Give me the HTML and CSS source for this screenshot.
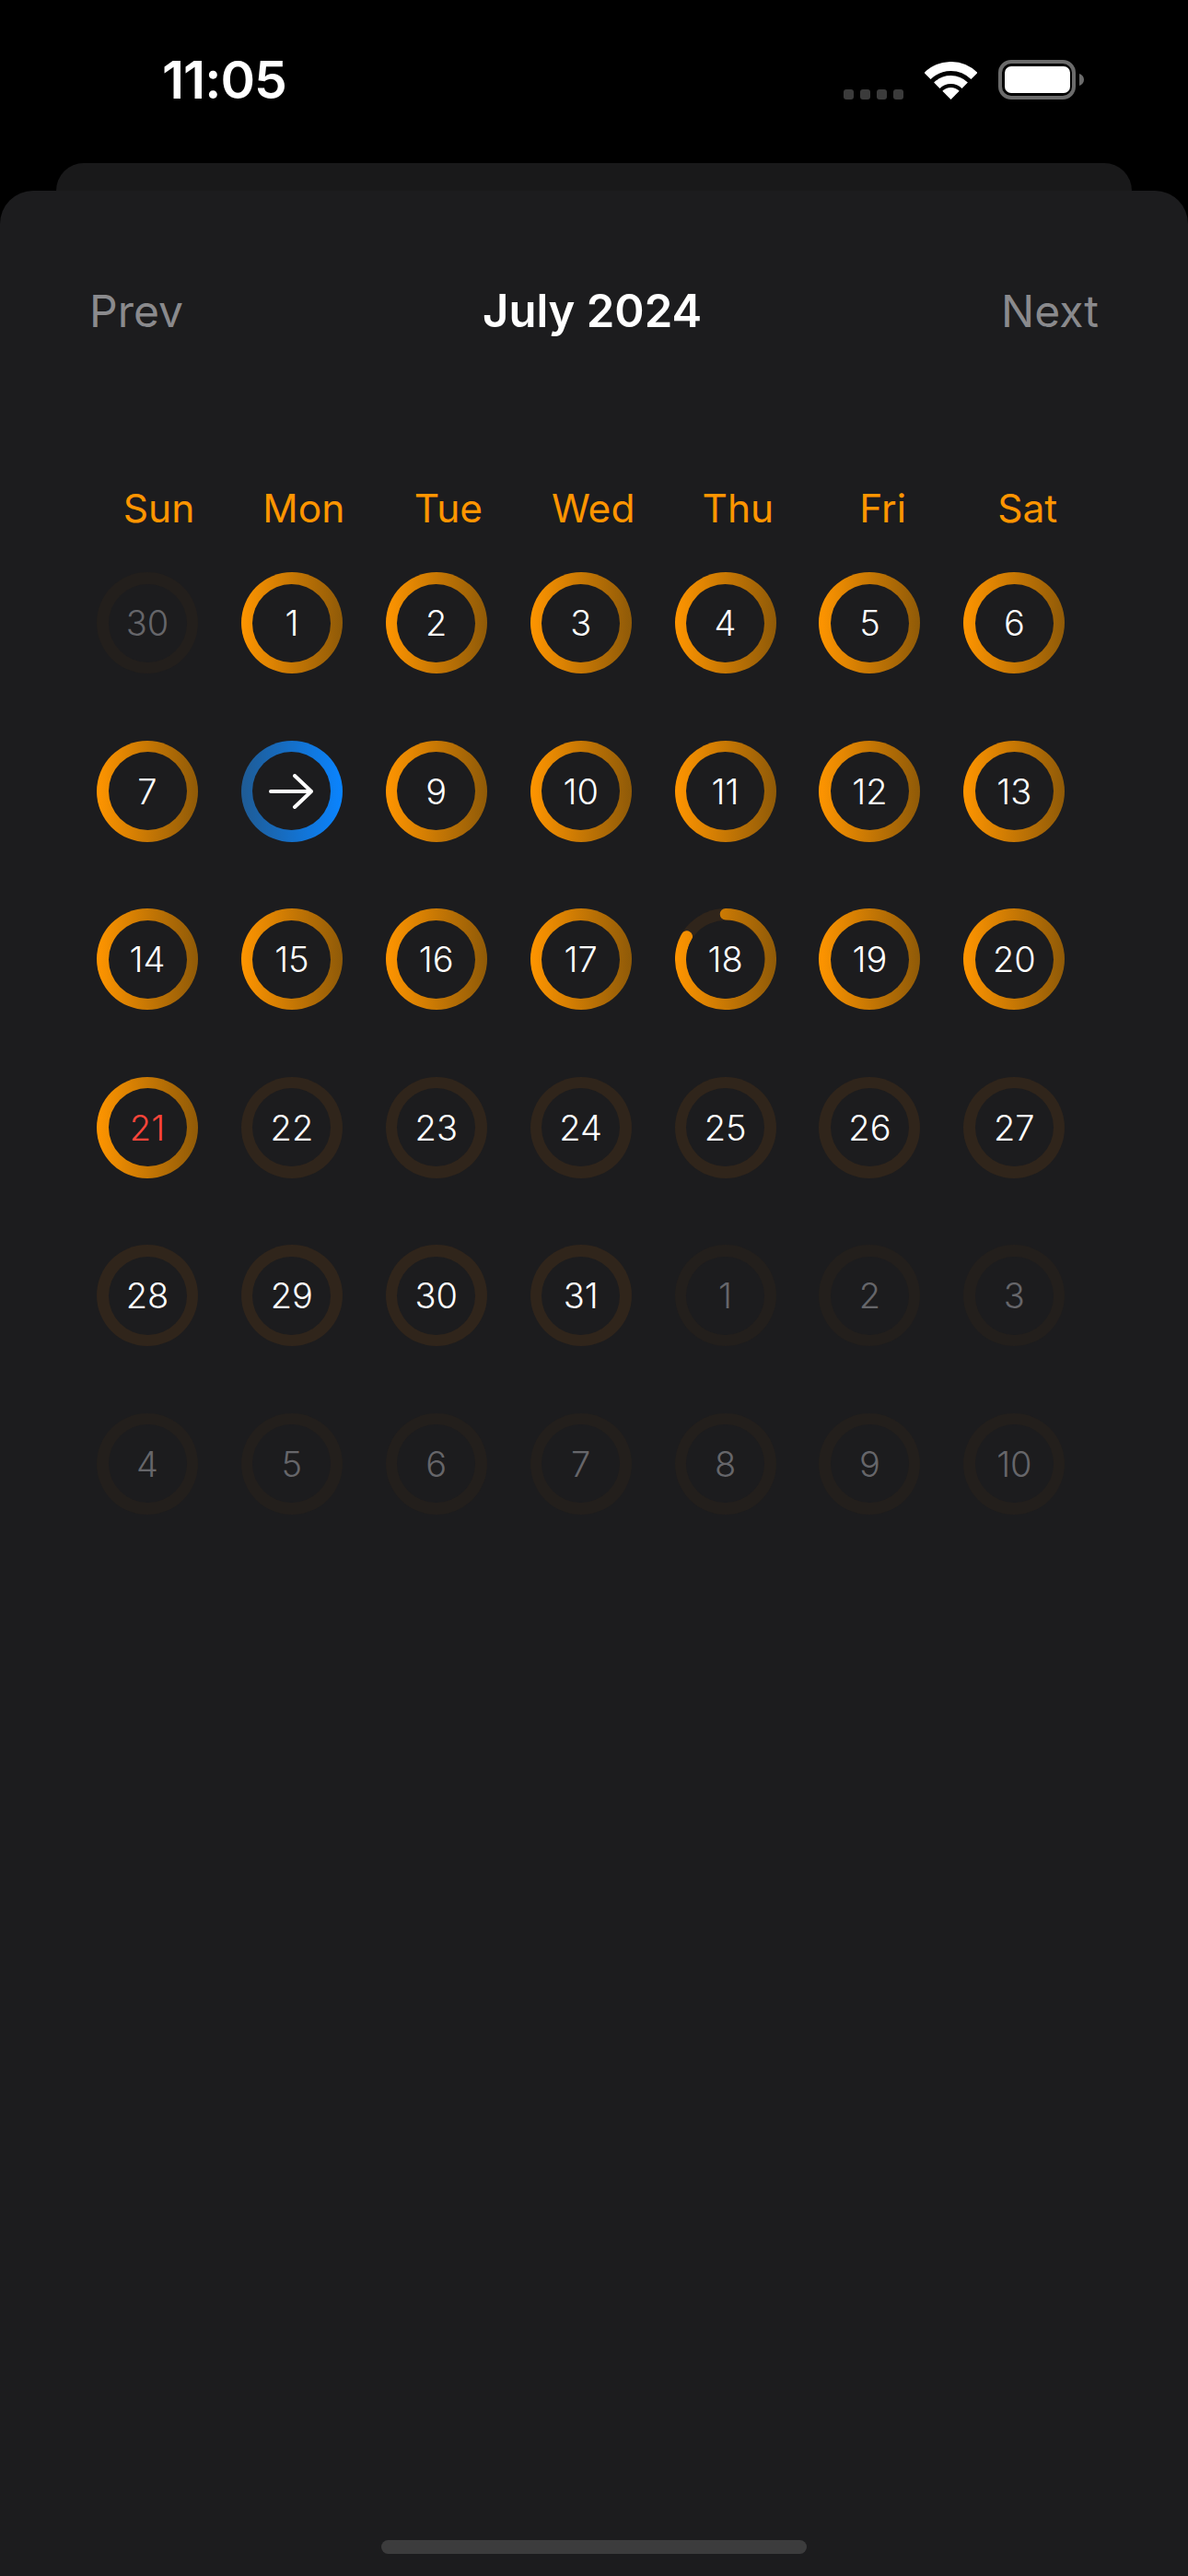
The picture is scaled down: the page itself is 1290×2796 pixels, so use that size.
FILE: index.html
```html
<!DOCTYPE html>
<html>
<head>
    <title>Calendar</title>
    <link rel="stylesheet" href="styles.css">
</head>
<body>
    <div class="status-bar">
        <div class="time">11:05</div>
        <div class="status-icons">
            <div class="signal"><span></span><span></span><span></span><span></span></div>
            <svg class="wifi" width="57" height="41" viewBox="0 0 57 41">
                <path d="M3.04 15.54A36 36 0 0 1 53.96 15.54" fill="none" stroke="#fff" stroke-width="10"/>
                <path d="M13.3 25.8A21.5 21.5 0 0 1 43.7 25.8" fill="none" stroke="#fff" stroke-width="9"/>
                <path d="M28.5 41L19.31 31.81A13 13 0 0 1 37.69 31.81Z" fill="#fff"/>
            </svg>
            <svg class="battery" width="93" height="43" viewBox="0 0 93 43">
                <rect x="2" y="2" width="80" height="39" rx="12" fill="none" stroke="#6b6b6b" stroke-width="4"/>
                <rect x="7" y="7" width="71" height="29" rx="7" fill="#fff"/>
                <path d="M88 15C91 16 93 18.500 93 21.500C93 24.500 91 27 88 28Z" fill="#6b6b6b"/>
            </svg>
        </div>
    </div>

    <div class="back-card"></div>

    <div class="sheet">
        <div class="month-nav">
            <div class="nav-link">Prev</div>
            <div class="month-title">July 2024</div>
            <div class="nav-link">Next</div>
        </div>

        <div class="weekdays">
            <div>Sun</div>
            <div>Mon</div>
            <div>Tue</div>
            <div>Wed</div>
            <div>Thu</div>
            <div>Fri</div>
            <div>Sat</div>
        </div>

        <div class="days">
            <div class="day faint"><span>30</span></div>
            <div class="day done"><span>1</span></div>
            <div class="day done"><span>2</span></div>
            <div class="day done"><span>3</span></div>
            <div class="day done"><span>4</span></div>
            <div class="day done"><span>5</span></div>
            <div class="day done"><span>6</span></div>

            <div class="day done"><span>7</span></div>
            <div class="day selected">
                <span>
                    <svg width="49" height="38" viewBox="0 0 49 38">
                        <path d="M2 19H46M28 2L46 19L28 36" fill="none" stroke="#fff" stroke-width="4" stroke-linecap="round" stroke-linejoin="round"/>
                    </svg>
                </span>
            </div>
            <div class="day done"><span>9</span></div>
            <div class="day done"><span>10</span></div>
            <div class="day done"><span>11</span></div>
            <div class="day done"><span>12</span></div>
            <div class="day done"><span>13</span></div>

            <div class="day done"><span>14</span></div>
            <div class="day done"><span>15</span></div>
            <div class="day done"><span>16</span></div>
            <div class="day done"><span>17</span></div>
            <div class="day partial">
                <svg class="progress" width="110" height="110" viewBox="0 0 110 110">
                    <defs>
                        <linearGradient id="ring-fill" gradientUnits="userSpaceOnUse" x1="0" y1="0" x2="110" y2="0">
                            <stop offset="0" stop-color="#ff9500"/>
                            <stop offset="1" stop-color="#8f5a08"/>
                        </linearGradient>
                    </defs>
                    <path d="M55 6.250A48.750 48.750 0 1 1 12.780 30.630" fill="none" stroke="url(#ring-fill)" stroke-width="12.500" stroke-linecap="round"/>
                </svg>
                <span>18</span>
            </div>
            <div class="day done"><span>19</span></div>
            <div class="day done"><span>20</span></div>

            <div class="day done today"><span>21</span></div>
            <div class="day"><span>22</span></div>
            <div class="day"><span>23</span></div>
            <div class="day"><span>24</span></div>
            <div class="day"><span>25</span></div>
            <div class="day"><span>26</span></div>
            <div class="day"><span>27</span></div>

            <div class="day"><span>28</span></div>
            <div class="day"><span>29</span></div>
            <div class="day"><span>30</span></div>
            <div class="day"><span>31</span></div>
            <div class="day faint"><span>1</span></div>
            <div class="day faint"><span>2</span></div>
            <div class="day faint"><span>3</span></div>

            <div class="day faint"><span>4</span></div>
            <div class="day faint"><span>5</span></div>
            <div class="day faint"><span>6</span></div>
            <div class="day faint"><span>7</span></div>
            <div class="day faint"><span>8</span></div>
            <div class="day faint"><span>9</span></div>
            <div class="day faint"><span>10</span></div>
        </div>

        <div class="home-bar"></div>
    </div>
</body>
</html>
```

FILE: styles.css
```css
html, body {
    margin: 0;
    padding: 0;
}

body {
    font-family: Inter, "Noto Sans", sans-serif;
    background-color: #000;
    color: #fff;
    width: 1290px;
    height: 2796px;
    display: flex;
    flex-direction: column;
    overflow: hidden;
}

.status-bar {
    height: 177px;
    box-sizing: border-box;
    padding: 63px 113px 0 176px;
    display: flex;
    justify-content: space-between;
    align-items: flex-start;
}

.time {
    font-size: 57px;
    font-weight: 600;
    line-height: 48px;
    letter-spacing: -1px;
}

.status-icons {
    display: flex;
    align-items: flex-end;
    height: 43px;
    margin-top: 2px;
}

.signal {
    display: flex;
    gap: 7px;
    margin-right: 23px;
}

.signal span {
    width: 11px;
    height: 11px;
    border-radius: 3px;
    background-color: #3b3b3b;
}

.wifi {
    margin-right: 23px;
}

.back-card {
    height: 30px;
    margin: 0 61px;
    background-color: #19191a;
    border-radius: 30px 30px 0 0;
}

.sheet {
    flex: 1;
    display: flex;
    flex-direction: column;
    background-color: #1c1c1e;
    border-radius: 36px 36px 0 0;
}

.month-nav {
    display: flex;
    justify-content: space-between;
    align-items: center;
    height: 56px;
    margin-top: 102px;
    padding: 0 97px;
    font-size: 48px;
}

.nav-link {
    color: #8a8a8d;
}

.month-title {
    font-size: 49px;
    font-weight: 600;
}

.weekdays {
    display: grid;
    grid-template-columns: repeat(7, 157.200px);
    margin-top: 156px;
    padding-left: 94px;
    height: 60px;
    align-items: center;
    font-size: 42.500px;
    color: #ff9500;
    text-align: center;
}

.days {
    display: grid;
    grid-template-columns: repeat(7, 110px);
    grid-auto-rows: 110px;
    column-gap: 46.900px;
    row-gap: 72.600px;
    margin-top: 40px;
    padding-left: 105px;
}

.day {
    position: relative;
    width: 110px;
    height: 110px;
    border-radius: 50%;
    background: #30251b;
    display: flex;
    align-items: center;
    justify-content: center;
}

.day span {
    position: relative;
    width: 85px;
    height: 85px;
    border-radius: 50%;
    background-color: #1c1c1e;
    display: flex;
    align-items: center;
    justify-content: center;
    font-size: 38px;
    font-weight: 300;
}

.day.done {
    background: linear-gradient(90deg, #ff9500, #8f5a08);
}

.day.selected {
    background: linear-gradient(90deg, #1f5b94, #0a84ff);
}

.day.faint {
    background: #231f1c;
}

.day.faint span {
    color: #66666a;
}

.day.today span {
    color: #ff453a;
}

.progress {
    position: absolute;
    top: 0;
    left: 0;
}

.home-bar {
    width: 462px;
    height: 15px;
    border-radius: 8px;
    background-color: #3c3c3d;
    margin: auto auto 24px;
}
```
